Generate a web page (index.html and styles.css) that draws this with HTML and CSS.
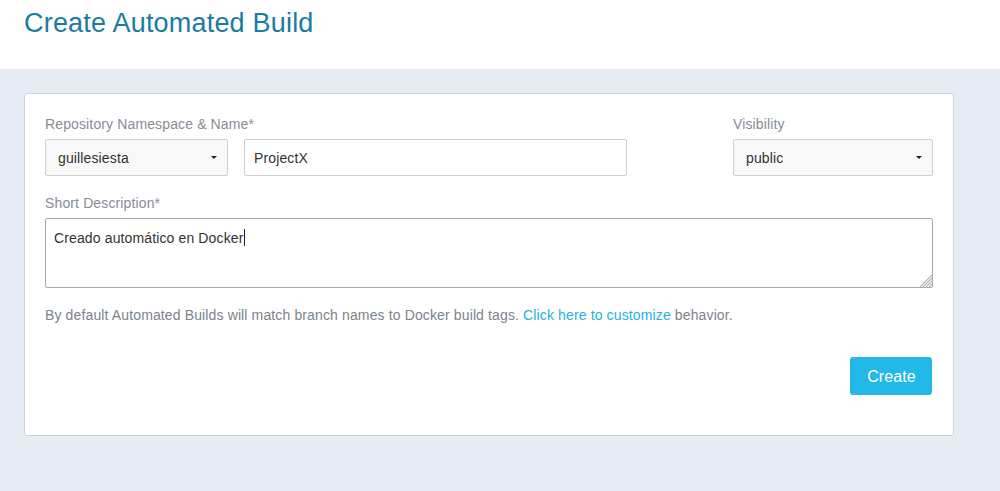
FILE: index.html
```html
<!DOCTYPE html>
<html>
<head>
<meta charset="utf-8">
<link rel="stylesheet" href="styles.css">
</head>
<body>
<header class="page-header">
  <h1 class="title">Create Automated Build</h1>
</header>
<main class="content">
  <section class="card">
    <div class="row">
      <div class="group group-name">
        <label class="label">Repository Namespace &amp; Name*</label>
        <div class="name-fields">
          <div class="select select-ns"><span>guillesiesta</span><span class="caret"></span></div>
          <div class="input input-name">ProjectX</div>
        </div>
      </div>
      <div class="group group-vis">
        <label class="label">Visibility</label>
        <div class="select select-vis"><span>public</span><span class="caret"></span></div>
      </div>
    </div>
    <div class="group group-desc">
      <label class="label">Short Description*</label>
      <div class="textarea">Creado automático en Docker<span class="cursor"></span>
        <svg class="grip" width="13" height="13" viewBox="0 0 13 13"><path d="M13 1 L1 13 M13 4 L4 13 M13 7 L7 13 M13 10 L10 13" stroke="#b5b5b5" stroke-width="1.2" fill="none"/></svg>
      </div>
    </div>
    <p class="help">By default Automated Builds will match branch names to Docker build tags. <a class="link" href="#">Click here to customize</a> behavior.</p>
    <div class="actions">
      <button class="btn">Create</button>
    </div>
  </section>
</main>
</body>
</html>
```
FILE: styles.css
```css
html, body {
  margin: 0;
  padding: 0;
}
body {
  font-family: "Liberation Sans", Arial, sans-serif;
  background: #e6ecf4;
  height: 491px;
  overflow: hidden;
  letter-spacing: 0.13px;
}
.page-header {
  background: #fff;
  height: 69px;
  padding: 0 24px;
  box-sizing: border-box;
}
.title {
  margin: 0;
  padding-top: 7px;
  font-size: 27px;
  letter-spacing: 0.2px;
  font-weight: normal;
  color: #1a7ca0;
  line-height: 32px;
}
.content {
  padding: 24px 46px 0 24px;
}
.card {
  background: #fff;
  border: 1px solid #ccd3dc;
  border-radius: 3px;
  padding: 20px 20px 40px 20px;
  box-sizing: border-box;
  width: 930px;
  height: 343px;
}
.row {
  display: flex;
  justify-content: space-between;
}
.group {
  display: flex;
  flex-direction: column;
}
.group-name {
  width: 582px;
}
.group-vis {
  width: 200px;
}
.label {
  font-size: 14px;
  color: #878c96;
  line-height: 20px;
  margin-bottom: 5px;
}
.name-fields {
  display: flex;
  gap: 16px;
}
.select, .input {
  height: 37px;
  box-sizing: border-box;
  border: 1px solid #cfcfcf;
  border-radius: 2px;
  font-size: 14px;
  color: #333;
  display: flex;
  align-items: center;
  justify-content: space-between;
}
.select {
  background: #f8f8f8;
  padding: 0 10px 0 12px;
}
.select-ns {
  width: 183px;
}
.select-vis {
  width: 200px;
}
.input {
  flex: 1;
  background: #fff;
  padding: 0 9px;
}
.caret {
  width: 0;
  height: 0;
  border-left: 3px solid transparent;
  border-right: 3px solid transparent;
  border-top: 3px solid #222;
}
.group-desc {
  margin-top: 17px;
}
.textarea {
  position: relative;
  height: 70px;
  box-sizing: border-box;
  border: 1px solid #a8a8a8;
  border-radius: 2px;
  padding: 9px 8px;
  font-size: 14px;
  color: #333;
  line-height: 20px;
}
.cursor {
  display: inline-block;
  width: 1px;
  height: 17px;
  background: #222;
  vertical-align: -3px;
}
.grip {
  position: absolute;
  right: 0;
  bottom: 0;
}
.help {
  margin: 17px 0 0 0;
  font-size: 14px;
  line-height: 20px;
  color: #7d828c;
}
.link {
  color: #22b3e4;
  text-decoration: none;
}
.actions {
  display: flex;
  justify-content: flex-end;
  margin-top: 32px;
  padding-right: 1px;
}
.btn {
  background: #23b8ea;
  color: #fff;
  border: none;
  border-radius: 3px;
  font-family: "Liberation Sans", Arial, sans-serif;
  font-size: 16px;
  letter-spacing: 0.1px;
  width: 82px;
  height: 38px;
  padding: 0 0 0 1px;
  line-height: 40px;
}
```
